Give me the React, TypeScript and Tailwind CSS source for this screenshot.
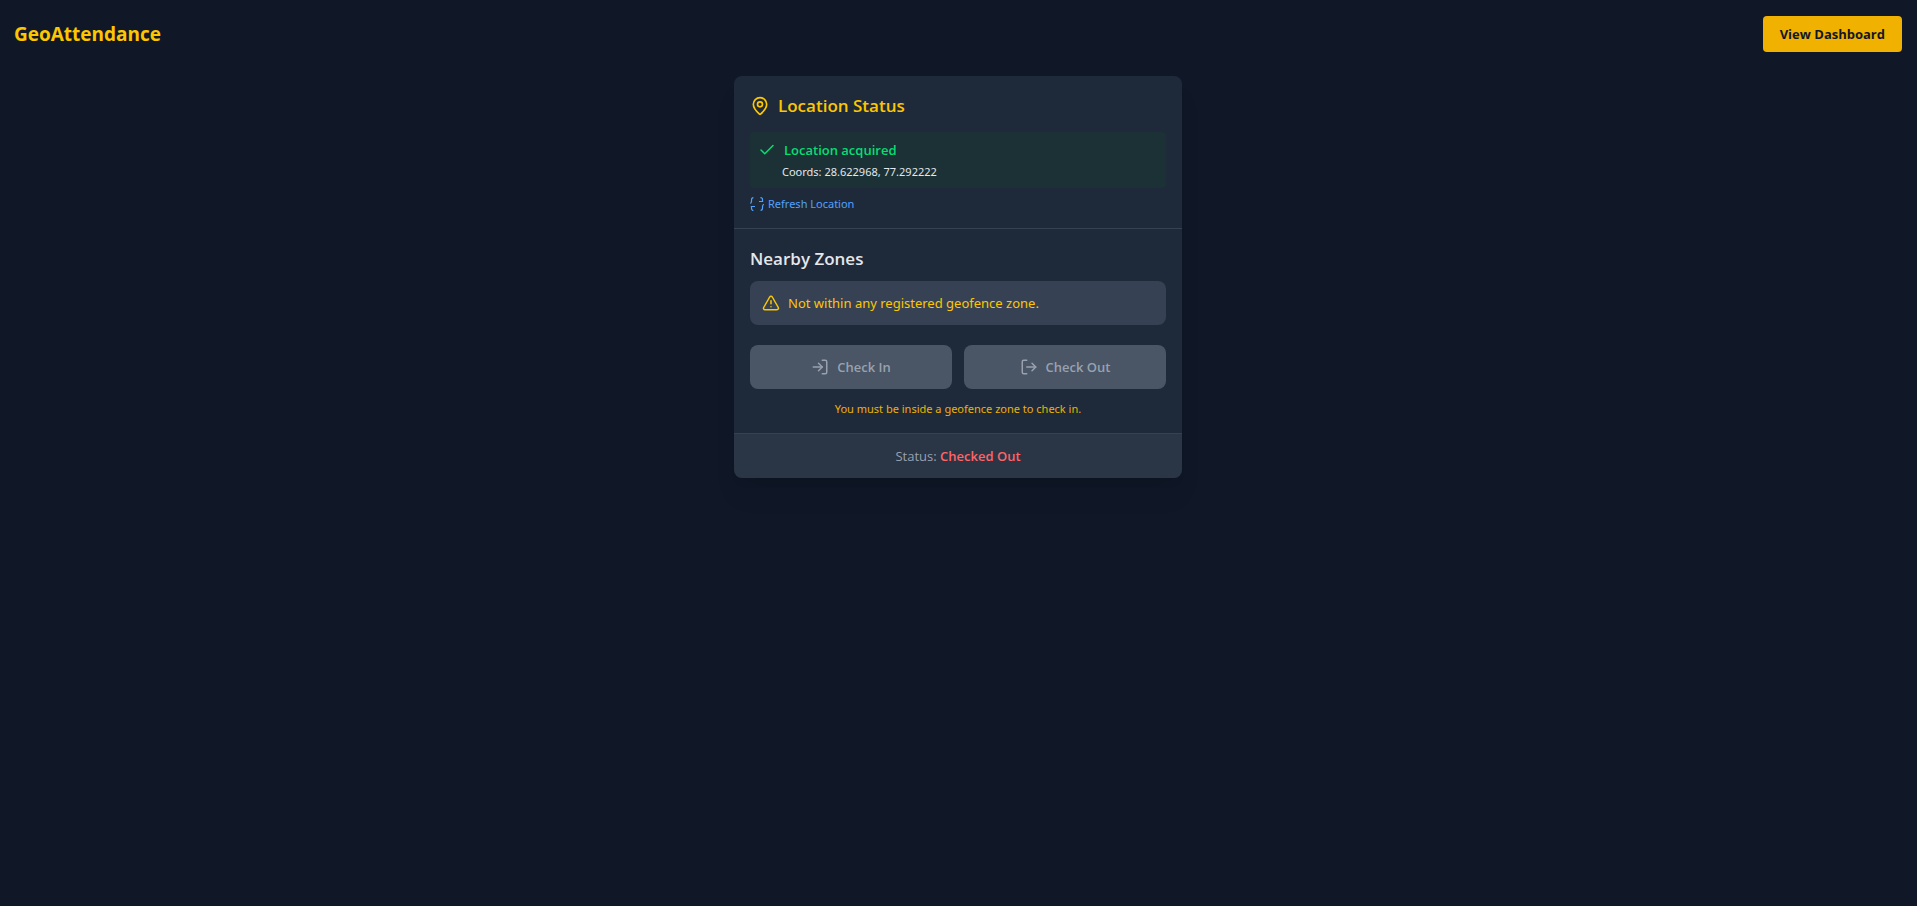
import { LogIn, LogOut, Check, MapPin, TriangleAlert } from "lucide-react";

function RefreshIcon() {
  return (
    <svg
      width="14"
      height="14"
      viewBox="0 0 14 14"
      fill="none"
      stroke="currentColor"
      strokeWidth="1.2"
      aria-hidden="true"
    >
      <path d="M3.4 0.6C2 0.6 1.5 1.4 1.5 3V4.2C1.5 5.2 1.2 5.8 0.4 6.4" />
      <path d="M5 9.5H0.8M1.5 9.5V11.6C1.5 12.8 2 13.5 3.4 13.5" />
      <path d="M9 4.5H13.2M12.5 4.5V2.6C12.5 1.4 12 0.6 10.4 0.6" />
      <path d="M13.8 7.2C12.9 7.8 12.5 8.6 12.5 9.8V11C12.5 12.6 12 13.4 10.6 13.4" />
    </svg>
  );
}

export default function App() {
  return (
    <div className="min-h-screen bg-gray-900 font-['Segoe_UI','Open_Sans','Noto_Sans',sans-serif] text-gray-200">
      <header className="flex items-center justify-between pt-4 pr-[15px] pb-6 pl-[14px]">
        <h1 className="text-[19px] leading-7 font-bold text-yellow-400">GeoAttendance</h1>
        <button
          type="button"
          className="h-9 rounded bg-yellow-500 px-[17px] text-[13px] leading-5 font-bold text-gray-900"
        >
          View Dashboard
        </button>
      </header>

      <div className="pr-px">
        <main className="mx-auto max-w-md overflow-hidden rounded-lg bg-gray-800 shadow-xl">
          <section className="border-b border-gray-700 p-4">
            <h2 className="mb-3 flex items-center gap-2 text-[17px] leading-7 font-semibold text-yellow-400">
              <MapPin size={20} />
              Location Status
            </h2>
            <div className="rounded bg-green-900/20 p-2">
              <div className="flex items-center gap-2 text-[13px] leading-5 font-semibold text-green-400">
                <Check size={18} />
                Location acquired
              </div>
              <p className="mt-1 ml-6 font-['Segoe_UI','Noto_Sans',sans-serif] text-[11px] leading-4">
                Coords: 28.622968, 77.292222
              </p>
            </div>
            <button
              type="button"
              className="mt-2 flex items-center gap-1 font-['Segoe_UI','Noto_Sans',sans-serif] text-[11px] leading-4 text-blue-400"
            >
              <RefreshIcon />
              Refresh Location
            </button>
          </section>

          <section className="p-4">
            <h2 className="mb-2 text-[17px] leading-7 font-semibold">Nearby Zones</h2>
            <div className="flex items-center gap-2 rounded-lg bg-gray-700 p-3 font-['Segoe_UI','Noto_Sans',sans-serif] text-[13px] leading-5 text-yellow-400">
              <TriangleAlert size={18} />
              Not within any registered geofence zone.
            </div>
            <div className="mt-5 grid grid-cols-2 gap-3">
              <button
                type="button"
                disabled
                className="flex items-center justify-center gap-2 rounded-lg bg-gray-600 py-3 text-[13px] leading-5 font-semibold text-gray-400"
              >
                <LogIn size={18} />
                Check In
              </button>
              <button
                type="button"
                disabled
                className="flex items-center justify-center gap-2 rounded-lg bg-gray-600 py-3 text-[13px] leading-5 font-semibold text-gray-400"
              >
                <LogOut size={18} />
                Check Out
              </button>
            </div>
            <p className="mt-3 text-center font-['Segoe_UI','Noto_Sans',sans-serif] text-[11px] leading-4 text-yellow-500">
              You must be inside a geofence zone to check in.
            </p>
          </section>

          <footer className="border-t border-gray-700 bg-gray-700/50 p-3 text-center text-[13px] leading-5 text-gray-400">
            Status: <span className="font-semibold text-red-400">Checked Out</span>
          </footer>
        </main>
      </div>
    </div>
  );
}
